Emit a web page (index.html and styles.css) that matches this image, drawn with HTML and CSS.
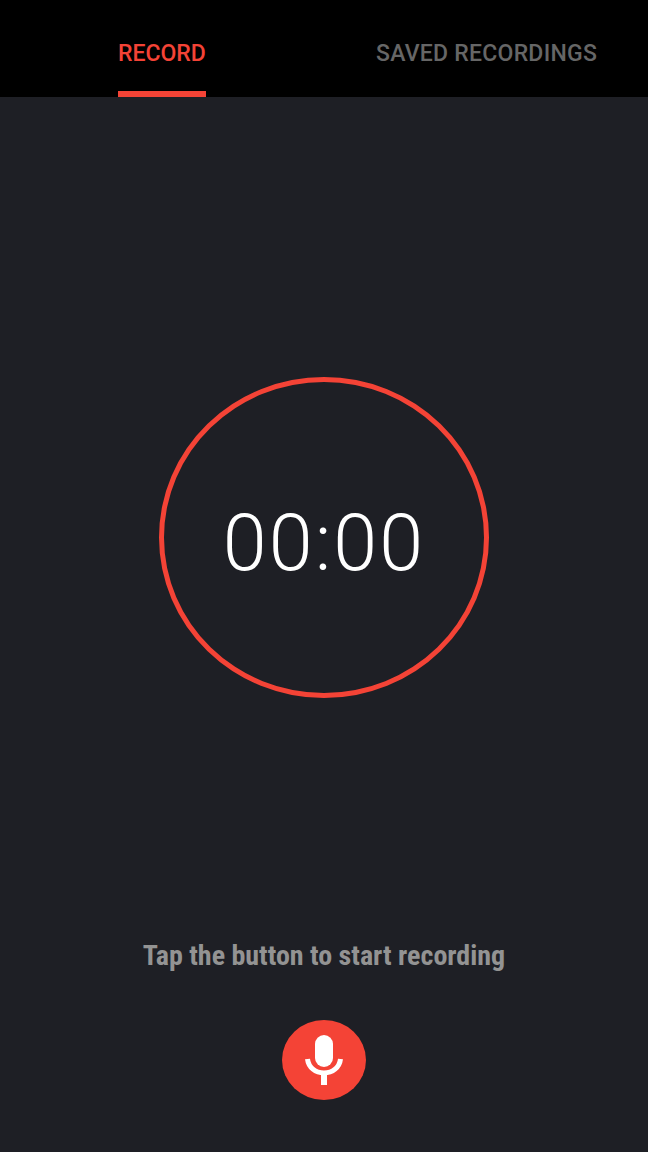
FILE: index.html
```html
<!DOCTYPE html>
<html lang="en">
<head>
<meta charset="utf-8">
<title>Recorder</title>
<link rel="stylesheet" href="styles.css">
</head>
<body>
<div class="app">
  <nav class="tabs">
    <div class="tab tab-active">RECORD</div>
    <div class="tab tab-saved">SAVED RECORDINGS</div>
  </nav>
  <main class="main">
    <div class="timer"><span class="time">00:00</span></div>
    <p class="hint">Tap the button to start recording</p>
    <button class="mic" type="button" aria-label="Record">
      <svg class="mic-icon" viewBox="0 0 38 50" width="38" height="50">
        <rect x="10" y="0" width="18" height="32" rx="9" fill="#fff"/>
        <path d="M2.5 24C3.5 32.5 10.5 38 19 38S34.5 32.5 35.5 24" fill="none" stroke="#fff" stroke-width="5"/>
        <rect x="16" y="38" width="6" height="12" fill="#fff"/>
      </svg>
    </button>
  </main>
</div>
</body>
</html>
```
FILE: styles.css
```css
html, body {
  margin: 0;
  padding: 0;
  background: #1e1f25;
}
.app {
  width: 648px;
  height: 1152px;
  display: flex;
  flex-direction: column;
  overflow: hidden;
  font-family: Roboto, "Liberation Sans", sans-serif;
}
.tabs {
  height: 97px;
  flex: none;
  box-sizing: border-box;
  background: #000;
  display: flex;
  padding-left: 118px;
  gap: 170px;
}
.tab {
  height: 97px;
  box-sizing: border-box;
  padding-top: 41px;
  font-size: 23px;
  line-height: 26px;
  font-weight: 500;
  letter-spacing: 0.25px;
  white-space: nowrap;
}
.tab-active {
  width: 88px;
  letter-spacing: 0;
  color: #f44336;
  border-bottom: 6px solid #f44336;
}
.tab-saved {
  color: #666;
}
.main {
  flex: 1;
  display: flex;
  flex-direction: column;
  align-items: center;
}
.timer {
  width: 330px;
  height: 321px;
  margin-top: 280px;
  padding-top: 11px;
  box-sizing: border-box;
  border: 5px solid #f44336;
  border-radius: 50%;
  display: flex;
  align-items: center;
  justify-content: center;
}
.time {
  color: #fff;
  font-size: 79px;
  font-weight: 300;
  line-height: 94px;
  letter-spacing: 2.1px;
}
.hint {
  margin: 241px 0 0;
  color: #939393;
  font-size: 28px;
  line-height: 34px;
  font-weight: 700;
  font-stretch: 75%;
  white-space: nowrap;
}
.mic {
  margin-top: 47px;
  width: 84px;
  height: 80px;
  padding: 0;
  border: 0;
  border-radius: 50%;
  background: #f44336;
  display: flex;
  align-items: center;
  justify-content: center;
}
.mic-icon {
  display: block;
}
```
